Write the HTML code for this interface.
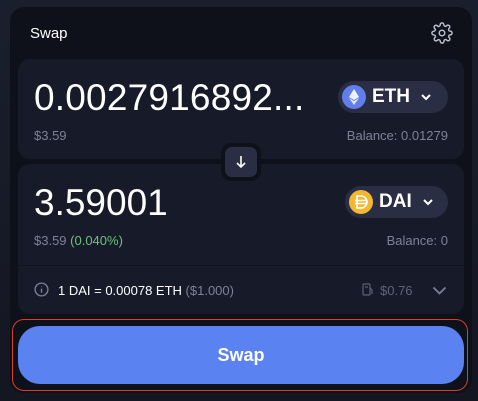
<!DOCTYPE html>
<html><head><style>
*{margin:0;padding:0;box-sizing:border-box}
body{width:478px;height:401px;background:linear-gradient(180deg,#1a1f2e,#141621);font-family:"Liberation Sans",sans-serif;position:relative;overflow:hidden}
.card{position:absolute;left:10px;top:7px;width:462px;height:386px;background:#0f111a;border-radius:14px}
.abs{position:absolute}
.panel{position:absolute;left:18px;width:446px;background:#171b29;border-radius:12px}
.pill{position:absolute;background:#2a2e44;border-radius:16px;height:32px;color:#fff;font-weight:bold;font-size:19px;display:flex;align-items:center}
.grey{color:#7d8196;font-size:13px}
</style></head><body>
<div class="card"></div>
<div class="abs" style="left:30px;top:25px;color:#fff;font-size:15px">Swap</div>
<svg class="abs" style="left:431px;top:22px" width="22" height="22" viewBox="0 0 24 24" fill="none" stroke="#b9bccb" stroke-width="1.6"><circle cx="12" cy="12" r="3"/><path d="M19.4 15a1.7 1.7 0 0 0 .3 1.8l.1.1a2 2 0 1 1-2.8 2.8l-.1-.1a1.7 1.7 0 0 0-1.8-.3 1.7 1.7 0 0 0-1 1.5V21a2 2 0 1 1-4 0v-.1a1.7 1.7 0 0 0-1.1-1.5 1.7 1.7 0 0 0-1.8.3l-.1.1a2 2 0 1 1-2.8-2.8l.1-.1a1.7 1.7 0 0 0 .3-1.8 1.7 1.7 0 0 0-1.5-1H3a2 2 0 1 1 0-4h.1a1.7 1.7 0 0 0 1.5-1.1 1.7 1.7 0 0 0-.3-1.8l-.1-.1a2 2 0 1 1 2.8-2.8l.1.1a1.7 1.7 0 0 0 1.8.3H9a1.7 1.7 0 0 0 1-1.5V3a2 2 0 1 1 4 0v.1a1.7 1.7 0 0 0 1 1.5 1.7 1.7 0 0 0 1.8-.3l.1-.1a2 2 0 1 1 2.8 2.8l-.1.1a1.7 1.7 0 0 0-.3 1.8V9a1.7 1.7 0 0 0 1.5 1H21a2 2 0 1 1 0 4h-.1a1.7 1.7 0 0 0-1.5 1z"/></svg>

<div class="panel" style="top:59px;height:100px"></div>
<div class="abs" style="left:34px;top:77px;color:#fff;font-size:37px;letter-spacing:0.2px">0.0027916892...</div>
<div class="abs grey" style="left:34px;top:128px">$3.59</div>
<div class="abs grey" style="right:30px;top:128px">Balance: 0.01279</div>
<div class="pill" style="left:338px;top:81px;width:110px">
<svg style="margin-left:4px" width="24" height="24" viewBox="0 0 24 24"><circle cx="12" cy="12" r="12" fill="#627eea"/><path d="M12 4l-5 8 5 3 5-3z" fill="#fff" opacity=".9"/><path d="M12 16l-5-3 5 7 5-7z" fill="#fff" opacity=".8"/></svg>
<span style="margin-left:6px">ETH</span>
<svg style="margin-left:10px" width="12" height="8" viewBox="0 0 12 8" fill="none" stroke="#fff" stroke-width="2"><path d="M2 2l4 4 4-4"/></svg></div>

<div class="panel" style="top:164px;height:150px"></div>
<div class="abs" style="left:18px;top:265px;width:446px;height:1px;background:#0f111a"></div>
<div class="abs" style="left:221px;top:143px;width:40px;height:38px;background:#0f111a;border-radius:10px"></div>
<div class="abs" style="left:225px;top:147px;width:32px;height:30px;background:#2a2e44;border-radius:7px"></div>
<svg class="abs" style="left:235px;top:155px" width="12" height="14" viewBox="0 0 12 14" fill="none" stroke="#fff" stroke-width="1.6"><path d="M6 1v11M2 8l4 4 4-4"/></svg>
<div class="abs" style="left:34px;top:182px;color:#fff;font-size:37px">3.59001</div>
<div class="abs grey" style="left:34px;top:233px">$3.59 <span style="color:#6fc07f">(0.040%)</span></div>
<div class="abs grey" style="right:30px;top:233px">Balance: 0</div>
<div class="pill" style="left:345px;top:186px;width:103px">
<svg style="margin-left:4px" width="24" height="24" viewBox="0 0 24 24"><circle cx="12" cy="12" r="12" fill="#f4b731"/><path d="M8 6h4a6 6 0 0 1 0 12H8zM6 10.5h12M6 13.5h12" fill="none" stroke="#fff" stroke-width="1.6"/></svg>
<span style="margin-left:6px">DAI</span>
<svg style="margin-left:10px" width="12" height="8" viewBox="0 0 12 8" fill="none" stroke="#fff" stroke-width="2"><path d="M2 2l4 4 4-4"/></svg></div>

<svg class="abs" style="left:34px;top:282px" width="15" height="15" viewBox="0 0 16 16" fill="none" stroke="#7d8196" stroke-width="1.4"><circle cx="8" cy="8" r="6.8"/><path d="M8 7v4.5M8 4.5v.5"/></svg>
<div class="abs" style="left:58px;top:283px;color:#fff;font-size:13px">1 DAI = 0.00078 ETH <span style="color:#7d8196">($1.000)</span></div>
<svg class="abs" style="left:362px;top:283px" width="12" height="13" viewBox="0 0 12 13" fill="none" stroke="#5d6176" stroke-width="1.2"><rect x="1" y="1" width="7" height="11" rx="1"/><path d="M3 4h3M8 5l2 2v4"/></svg>
<div class="abs" style="left:380px;top:283px;color:#5f6378;font-size:13px">$0.76</div>
<svg class="abs" style="left:432px;top:286px" width="15" height="9" viewBox="0 0 15 9" fill="none" stroke="#7d8196" stroke-width="1.8"><path d="M1.5 1.5l6 6 6-6"/></svg>

<div class="abs" style="left:12px;top:319px;width:456px;height:72px;border:1px solid #d4402c;border-radius:12px"></div>
<div class="abs" style="left:18px;top:326px;width:446px;height:58px;background:#5a82f1;border-radius:22px;color:#fff;font-weight:bold;font-size:18px;display:flex;align-items:center;justify-content:center">Swap</div>
</body></html>
